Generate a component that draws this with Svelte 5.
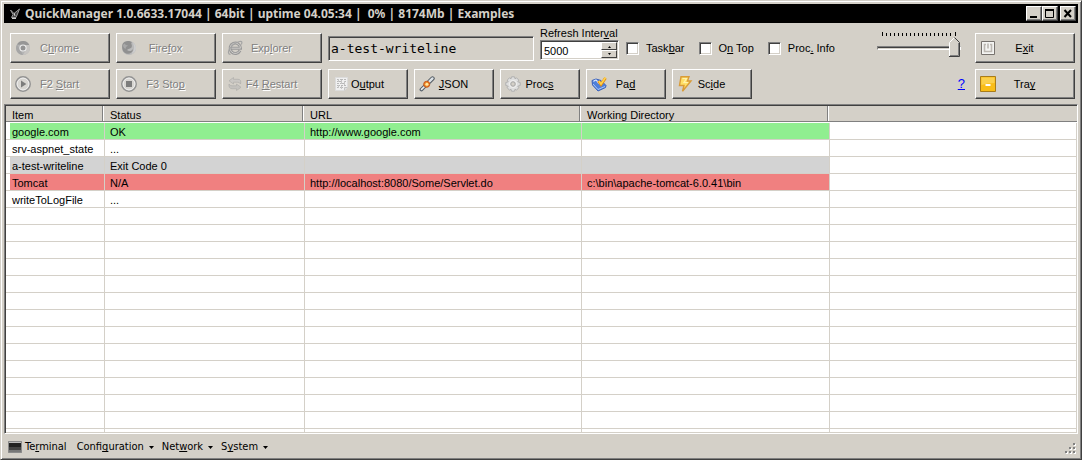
<script>
  let interval = $state(5000);
  let opacity = $state(100);
  const taskNames = [
    { icon: 'chrome', pre: 'C', key: 'h', post: 'rome' },
    { icon: 'firefox', pre: 'Fire', key: 'f', post: 'ox' },
    { icon: 'explorer', pre: 'Exp', key: 'l', post: 'orer' }
  ];
  const actions = [
    { icon: 'start', pre: 'F2 ', key: 'S', post: 'tart' },
    { icon: 'stop', pre: 'F3 Sto', key: 'p', post: '' },
    { icon: 'restart', pre: 'F4 ', key: 'R', post: 'estart' }
  ];
  const tools = [
    { icon: 'output', pre: 'O', key: 'u', post: 'tput' },
    { icon: 'json', pre: '', key: 'J', post: 'SON' },
    { icon: 'procs', pre: 'Proc', key: 's', post: '' },
    { icon: 'pad', pre: 'Pa', key: 'd', post: '' },
    { icon: 'scide', pre: 'Sc', key: 'i', post: 'de' }
  ];
  const checks = [
    { pre: 'Task', key: 'b', post: 'ar' },
    { pre: 'O', key: 'n', post: ' Top' },
    { pre: 'Proc', key: '.', post: ' Info' }
  ];
  const rows = [
    { item: 'google.com', status: 'OK', url: 'http://www.google.com', dir: '', tone: 'ok' },
    { item: 'srv-aspnet_state', status: '...', url: '', dir: '', tone: '' },
    { item: 'a-test-writeline', status: 'Exit Code 0', url: '', dir: '', tone: 'ended' },
    { item: 'Tomcat', status: 'N/A', url: 'http://localhost:8080/Some/Servlet.do', dir: 'c:\\bin\\apache-tomcat-6.0.41\\bin', tone: 'failed' },
    { item: 'writeToLogFile', status: '...', url: '', dir: '', tone: '' }
  ];
  const emptyRows = Array.from({ length: 13 }, (_, i) => i);
  const ticks = Array.from({ length: 19 }, (_, i) => (i === 18 ? 73 : i * 4));
  const menus = [
    { pre: 'Confi', key: 'g', post: 'uration' },
    { pre: 'Net', key: 'w', post: 'ork' },
    { pre: 'S', key: 'y', post: 'stem' }
  ];
</script>

{#snippet label(t)}{t.pre}<u>{t.key}</u>{t.post}{/snippet}

{#snippet icon(name)}
  <svg class="icon" width="16" height="16" viewBox="0 0 16 16" aria-hidden="true">
    {#if name === 'chrome'}
      <circle cx="8" cy="8" r="7" fill="#b4b4b4" />
      <path d="M2 4.500A7 7 0 0 1 14.300 5H8Z" fill="#969696" />
      <path d="M2 4.500 5.200 9.800 8 15A7 7 0 0 1 2 4.500Z" fill="#a6a6a6" />
      <path d="M14.300 5A7 7 0 0 1 8 15L11 9.500 10 5Z" fill="#c6c4c1" />
      <circle cx="8" cy="8" r="3.600" fill="#eee" />
      <circle cx="8" cy="8" r="2.500" fill="#939393" />
    {:else if name === 'firefox'}
      <circle cx="8" cy="8" r="7" fill="#bababa" />
      <path d="M1.500 4C3 1 8 0 11 2.500 9 3 12 5 10.500 7.500 9.500 9 7 8.500 6 10 8 12 11 11 12 9 12 13 8 14.500 5 13.500 1.500 12 .5 8 1.500 4Z" fill="#909090" />
      <path d="M2 5 3.500 3.500 5 5 7 5.500 5 7 4.500 9C3 8 2 7 2 5Z" fill="#a8a8a8" />
      <path d="M11 2.500C14 5 14 11 10 14 13 13 15 11 15 8S13 3.500 11 2.500Z" fill="#cfcfcf" />
    {:else if name === 'explorer'}
      <path d="M13 10.500A5.200 5.200 0 1 1 13.500 8.200H4.500" fill="none" stroke="#999" stroke-width="3" />
      <path d="M13 10.500A5.200 5.200 0 1 1 13.500 8.200H4.500" fill="none" stroke="#cfcdca" stroke-width="1" />
      <path d="M3.500 14.500C-1.500 14 3 4.500 12.500 1.500c2.800-.7 2.800 1 1.800 3" fill="none" stroke="#a4a4a4" stroke-width="1.200" />
    {:else if name === 'start'}
      <circle cx="8" cy="8" r="7.200" fill="#d8d6d2" stroke="#929292" stroke-width="1.500" />
      <circle cx="8" cy="8" r="5.900" fill="none" stroke="#eee" />
      <path d="M6 4.500 11.300 8 6 11.500Z" fill="#7c7c7c" />
    {:else if name === 'stop'}
      <circle cx="8" cy="8" r="7.200" fill="#d8d6d2" stroke="#929292" stroke-width="1.500" />
      <circle cx="8" cy="8" r="5.900" fill="none" stroke="#eee" />
      <path d="M5 5h6v6H5Z" fill="#7c7c7c" />
    {:else if name === 'restart'}
      <path d="M6.500 1.500 2 4.800l4.500 3.200V6.200H11q1.500 0 2.500 1.800 1.200-4.700-2.500-4.700H6.500Z" fill="#cac8c4" stroke="#b3b1ad" stroke-width=".8" />
      <path d="M9.500 8 14 11.300 9.500 14.500v-1.800H5Q1.500 12.500 2 8q1 1.800 3 1.800h4.500Z" fill="#c4c2be" stroke="#b3b1ad" stroke-width=".8" />
    {:else if name === 'output'}
      <path d="M2.500 1.500h12v10l-3 3h-9Z" fill="#f0f0f0" stroke="#dcdcdc" />
      <path d="M4 3.500h2m1 0h3m1 0h2M4 5.500h1m1 0h3m2 0h2M4 7.500h2m1 0h1m1 0h3M4 9.500h3m1 0h2m1 0h2M4 11.500h2m1 0h3" stroke="#b8b8b8" />
      <path d="M5.500 3v3m3-2v4m3-3v4m-6 0v3m3-2v3" stroke="#c6c6c6" />
      <path d="M11.500 14.500v-3h3" fill="#ddd" stroke="#c4c4c4" />
    {:else if name === 'json'}
      <path d="M2.500 13.500 5.500 10.500" stroke="#555e68" stroke-width="3.800" stroke-linecap="round" />
      <path d="M2.500 13.300 6 10" stroke="#e8edf2" stroke-width="1.600" stroke-linecap="round" />
      <path d="M10 6 13.500 2.500" stroke="#515961" stroke-width="4.400" stroke-linecap="round" />
      <path d="M10 5.800 13.500 2.400" stroke="#dce2e7" stroke-width="2.400" stroke-linecap="round" />
      <circle cx="7.700" cy="8.300" r="3" fill="#ef8a28" stroke="#c6551a" />
      <circle cx="7.900" cy="8.200" r="1.500" fill="#ffe9a5" />
    {:else if name === 'procs'}
      <path d="M6.500.8h3l.5 2 1.500-1 2.300 2.300-1 1.700 2.400.7v3l-2.400.7 1 1.500-2.300 2.500-1.500-1-.5 2h-3L6 13.200l-1.500 1-2.300-2.500 1-1.500L.8 9.500v-3l2.400-.7-1-1.700L4.500 1.800 6 2.800Z" fill="#dedede" stroke="#b0b0b0" />
      <circle cx="8" cy="8" r="3.400" fill="#d0cfcb" stroke="#eee" stroke-width="1.200" />
      <circle cx="8" cy="8" r="2.200" fill="#d4d0c8" stroke="#a8a8a8" />
    {:else if name === 'pad'}
      <path d="M1 4.500 5 3 10 4.500 15 9.500 14.500 11.500 7 15 1.500 9Z" fill="#4f7fd9" stroke="#3c62bb" />
      <path d="M2 8 7 13.500 14 10.500" fill="none" stroke="#a9c8fa" />
      <path d="M2.500 5.500Q5 3 6 5T9 8" fill="none" stroke="#dce9ff" stroke-width="1.200" />
      <path d="M7.500 5 10 8.500 14.500 2" fill="none" stroke="#e58b14" stroke-width="3" />
      <path d="M7.800 5 10 8 14.500 1.500" fill="none" stroke="#ffd34a" stroke-width="1.600" />
    {:else if name === 'scide'}
      <path d="M4 .8h8L10.500 5H14L5.500 15.300 7 9.500H2.500Z" fill="#ffdf67" stroke="#d99b38" stroke-width="1.400" />
      <path d="M5.500 2.500h4L7 6.500h4" fill="none" stroke="#fff3ae" stroke-width="1.200" />
    {:else if name === 'exit'}
      <path d="M1.500 1.500h13v13h-13Z" fill="#f4f4f2" stroke="#77736f" />
      <path d="M6 4.500H4.500v7h7v-7H10M8 3.500v5" fill="none" stroke="#bcb8b2" stroke-width="1.600" />
    {:else if name === 'tray'}
      <path d="M.5.5h15v15H.5Z" fill="#f9bd18" stroke="#a87c1a" />
      <path d="M1.500 1.500h13V7q-7 0-13 2Z" fill="#fbd04c" />
      <path d="M5.500 8h5v2h-5Z" fill="#fff" />
    {/if}
  </svg>
{/snippet}

<main class="window">
  <header class="titlebar">
    <svg width="12" height="12" viewBox="0 0 12 12" aria-hidden="true">
      <path d="M1.500 2 5 5.500 10.500 1 8.500 6 7 9.500H2.500L4 6.500Z" fill="#444" stroke="#999" />
      <path d="M3 10.500h4M5 5l1 3" stroke="#ccc" />
    </svg>
    <h1>QuickManager 1.0.6633.17044 | 64bit | uptime 04.05:34 |&nbsp; 0% | 8174Mb | Examples</h1>
    <div class="window-buttons">
      <button aria-label="Minimize"><svg width="12" height="11" viewBox="0 0 12 11"><path d="M2 9h7" stroke="#000" stroke-width="2" /></svg></button>
      <button aria-label="Maximize"><svg width="12" height="11" viewBox="0 0 12 11"><path d="M1.500 1v8.500h8V1" fill="none" stroke="#000" /><path d="M1 2h9" stroke="#000" stroke-width="2" /></svg></button>
      <button class="close" aria-label="Close"><svg width="12" height="11" viewBox="0 0 12 11"><path d="M2.500 2 9 9M9 2 2.500 9" stroke="#000" stroke-width="2" /></svg></button>
    </div>
  </header>

  <section class="toolbar">
    <div class="bar">
      {#each taskNames as t}
        <button class="push" disabled>{@render icon(t.icon)}<span>{@render label(t)}</span></button>
      {/each}
      <input class="name" aria-label="Selected item" value="a-test-writeline" readonly />
      <div class="interval">
        <label for="interval">Refresh Inter<u>v</u>al</label>
        <div class="spin">
          <input id="interval" type="text" bind:value={interval} />
          <div class="arrows">
            <button aria-label="Increase" onclick={() => (interval = +interval + 100)}><svg width="5" height="3" viewBox="0 0 5 3"><path d="M1 3 2.500 1 4 3Z" /></svg></button>
            <button aria-label="Decrease" onclick={() => (interval = +interval - 100)}><svg width="5" height="3" viewBox="0 0 5 3"><path d="M1 0 2.500 2 4 0Z" /></svg></button>
          </div>
        </div>
      </div>
      <div class="checks">
        {#each checks as c}
          <label><input type="checkbox" /><span>{@render label(c)}</span></label>
        {/each}
      </div>
      <div class="slider">
        <svg width="76" height="4" viewBox="0 0 76 4" aria-hidden="true">
          {#each ticks as x, i}
            <rect {x} y={i === 0 || i === 18 ? 0 : 1} width="1" height={i === 0 || i === 18 ? 4 : 3} />
          {/each}
        </svg>
        <input type="range" aria-label="Opacity" min="10" max="100" bind:value={opacity} />
      </div>
      <button class="push">{@render icon('exit')}<span>E<u>x</u>it</span></button>
    </div>
    <div class="bar">
      {#each actions as t}
        <button class="push" disabled>{@render icon(t.icon)}<span>{@render label(t)}</span></button>
      {/each}
      {#each tools as t}
        <button class="push small">{@render icon(t.icon)}<span>{@render label(t)}</span></button>
      {/each}
      <a class="help" href="#help">?</a>
      <button class="push">{@render icon('tray')}<span>Tra<u>y</u></span></button>
    </div>
  </section>

  <section class="list">
    <table>
      <colgroup><col class="c1" /><col class="c2" /><col class="c3" /><col class="c4" /><col /></colgroup>
      <thead>
        <tr><th>Item</th><th>Status</th><th>URL</th><th>Working Directory</th><th></th></tr>
      </thead>
      <tbody>
        {#each rows as r}
          <tr class={r.tone}><td>{r.item}</td><td>{r.status}</td><td>{r.url}</td><td>{r.dir}</td><td></td></tr>
        {/each}
        {#each emptyRows as n (n)}
          <tr><td></td><td></td><td></td><td></td><td></td></tr>
        {/each}
        <tr class="rest"><td></td><td></td><td></td><td></td><td></td></tr>
      </tbody>
    </table>
  </section>

  <footer>
    <button class="menu terminal">
      <svg width="14" height="12" viewBox="0 0 14 12" aria-hidden="true">
        <path d="M.5.5h13v11H.5Z" fill="#222" stroke="#8a8a8a" />
        <path d="M1 1h12v1H1Z" fill="#bbb" />
        <path d="M1 6h12v5H1Z" fill="#444" />
        <path d="M1 9h12v2H1Z" fill="#777" />
      </svg>
      <span>Te<u>r</u>minal</span>
    </button>
    {#each menus as m}
      <button class="menu">
        <span>{@render label(m)}</span>
        <svg width="5" height="3" viewBox="0 0 5 3" aria-hidden="true"><path d="M0 0h5L2.500 3Z" /></svg>
      </button>
    {/each}
    <svg class="grip" width="12" height="12" viewBox="0 0 12 12" aria-hidden="true">
      <path d="M9 1h2v2H9ZM5 5h2v2H5ZM9 5h2v2H9ZM1 9h2v2H1ZM5 9h2v2H5ZM9 9h2v2H9Z" fill="#fff" />
      <path d="M8 0h2v2H8ZM4 4h2v2H4ZM8 4h2v2H8ZM0 8h2v2H0ZM4 8h2v2H4ZM8 8h2v2H8Z" fill="#808080" />
    </svg>
  </footer>
</main>

<style>
  :global(body) {
    margin: 0;
    background: #d4d0c8;
  }
  .window {
    box-sizing: border-box;
    min-height: 100vh;
    display: flex;
    flex-direction: column;
    padding: 3px 3px 1px;
    border: 1px solid;
    border-color: #d4d0c8 #404040 #404040 #d4d0c8;
    box-shadow: inset 1px 1px #fff, inset -1px -1px #808080;
    background: #d4d0c8;
    font: 11px/14px "Liberation Sans", Arial, sans-serif;
    color: #000;
  }
  button, input {
    font: inherit;
    color: inherit;
    box-sizing: border-box;
    margin: 0;
    border-radius: 0;
  }
  u {
    text-underline-offset: 1px;
    text-decoration-thickness: 1px;
    text-decoration-skip-ink: none;
  }
  .titlebar {
    display: flex;
    align-items: center;
    height: 19px;
    gap: 4px;
    padding: 0 2px 0 5px;
    background: #000;
  }
  h1 {
    flex: 1;
    margin: 0;
    color: #d4d0c8;
    font: bold 12px/19px "Noto Sans", Tahoma, sans-serif;
    white-space: nowrap;
  }
  .window-buttons {
    display: flex;
  }
  .window-buttons button {
    display: flex;
    width: 16px;
    height: 15px;
    padding: 1px;
    border: 1px solid;
    border-color: #fff #404040 #404040 #fff;
    box-shadow: inset -1px -1px #808080;
    background: #d4d0c8;
  }
  .window-buttons .close {
    margin-left: 2px;
  }
  .toolbar {
    display: flex;
    flex-direction: column;
    gap: 6px;
    padding: 10px 3px 5px 6px;
  }
  .bar {
    display: flex;
    gap: 6px;
    height: 30px;
  }
  .push {
    display: grid;
    grid-template: 1fr / 1fr;
    align-items: center;
    flex: none;
    width: 100px;
    padding: 0 5px 0 4px;
    border: 1px solid;
    border-color: #fff #404040 #404040 #fff;
    box-shadow: inset -1px -1px #808080;
    background: #d4d0c8;
  }
  .push.small {
    width: 80px;
  }
  .push .icon, .push span {
    grid-area: 1 / 1;
  }
  .push span {
    justify-self: center;
  }
  .push:disabled {
    color: #808080;
    text-shadow: 1px 1px #fff;
  }
  .name {
    width: 206px;
    height: 25px;
    margin-top: 3px;
    padding: 0 2px;
    border: 1px solid;
    border-color: #808080 #fff #fff #808080;
    box-shadow: inset 1px 1px #404040;
    background: #d4d0c8;
    font: 13px/20px "DejaVu Sans Mono", Consolas, monospace;
  }
  .interval {
    display: flex;
    flex-direction: column;
    width: 79px;
    margin-top: -7px;
  }
  .spin {
    display: flex;
    height: 20px;
    box-sizing: border-box;
    border: 1px solid;
    border-color: #808080 #fff #fff #808080;
    background: #fff;
    box-shadow: inset 1px 1px #404040, inset -1px -1px #d4d0c8;
    padding: 1px;
  }
  .spin input {
    flex: 1;
    min-width: 0;
    padding: 1px 2px 0;
    border: 0;
    background: none;
  }
  .arrows {
    display: flex;
    flex-direction: column;
    width: 16px;
  }
  .arrows button {
    flex: 1;
    display: grid;
    place-items: center;
    min-height: 0;
    padding: 0;
    border: 1px solid;
    border-color: #fff #404040 #404040 #fff;
    background: #d4d0c8;
  }
  .checks {
    display: flex;
    align-items: center;
    gap: 14px;
    margin-left: 1px;
  }
  .checks label {
    display: flex;
    align-items: center;
    gap: 7px;
    white-space: nowrap;
  }
  .checks input {
    appearance: none;
    width: 13px;
    height: 13px;
    border: 1px solid;
    border-color: #808080 #fff #fff #808080;
    box-shadow: inset 1px 1px #404040, inset -1px -1px #d4d0c8;
    background: #fff;
  }
  .checks input:checked {
    background: #000 content-box;
    padding: 3px;
  }
  .slider {
    display: flex;
    flex-direction: column;
    width: 84px;
    margin: -1px 8px 0 auto;
  }
  .slider svg {
    margin-left: 5px;
  }
  .slider input {
    appearance: none;
    width: 84px;
    height: 24px;
    background: none;
  }
  .slider input::-webkit-slider-runnable-track {
    height: 4px;
    box-sizing: border-box;
    border: 1px solid;
    border-color: #808080 #fff #fff #808080;
    background: linear-gradient(#404040 1px, #d4d0c8 1px);
  }
  .slider input::-webkit-slider-thumb {
    appearance: none;
    width: 11px;
    height: 20px;
    margin-top: -10px;
    background: url("data:image/svg+xml,%3Csvg xmlns='http://www.w3.org/2000/svg' viewBox='0 0 11 20'%3E%3Cpath d='M.5 19.500V5.500l5-5 5 5v14Z' fill='%23d4d0c8'/%3E%3Cpath d='M.5 19V5.500l5-5' fill='none' stroke='%23fff'/%3E%3Cpath d='M5.500.5l5 5v14H0' fill='none' stroke='%23404040'/%3E%3Cpath d='M9.500 6v12.500H1' fill='none' stroke='%23808080'/%3E%3C/svg%3E");
  }
  .help {
    margin: 0 4px 0 auto;
    align-self: center;
    color: #00f;
    font-size: 13px;
  }
  .list {
    flex: 1;
    border: 1px solid;
    border-color: #808080 #fff #fff #808080;
    box-shadow: inset 1px 1px #404040;
    padding: 1px 0 0 1px;
    background: #fff;
  }
  table {
    width: 100%;
    table-layout: fixed;
    border-collapse: separate;
    border-spacing: 0;
  }
  .c1 { width: 99px; }
  .c2 { width: 200px; }
  .c3 { width: 277px; }
  .c4 { width: 248px; }
  th, td {
    box-sizing: border-box;
    height: 17px;
    padding: 2px 5px 0;
    font-weight: normal;
    line-height: 14px;
    text-align: left;
    white-space: nowrap;
    overflow: hidden;
  }
  th {
    border-bottom: 1px solid #fff;
    background: linear-gradient(to left, #d4d0c8 1px, #fff 1px 2px, #808080 2px 3px, transparent 3px), #d4d0c8;
    box-shadow: inset 0 -1px #808080;
  }
  th:last-child {
    background: #d4d0c8;
  }
  td {
    border: solid #d4d0c8;
    border-width: 0 1px 1px 0;
  }
  th:first-child, td:first-child {
    padding-left: 6px;
  }
  .ok td { background: #90ee90; }
  .ended td { background: #d3d3d3; }
  .failed td { background: #f08080; }
  tbody tr td:first-child {
    box-shadow: inset 4px 0 #fff;
  }
  tbody tr td:last-child {
    background: #fff;
  }
  .rest td {
    height: 4px;
    padding: 0;
    line-height: 0;
  }
  footer {
    display: flex;
    align-items: center;
    height: 24px;
    box-sizing: border-box;
    padding: 2px 1px 0 4px;
    gap: 8px;
    font: 11px/14px "DejaVu Sans Condensed", Tahoma, sans-serif;
  }
  .menu {
    display: flex;
    align-items: center;
    gap: 5px;
    padding: 0;
    border: 0;
    background: none;
  }
  .terminal {
    gap: 3px;
    margin-right: 2px;
  }
  .grip {
    margin: 0 0 3px auto;
    align-self: flex-end;
  }
</style>
